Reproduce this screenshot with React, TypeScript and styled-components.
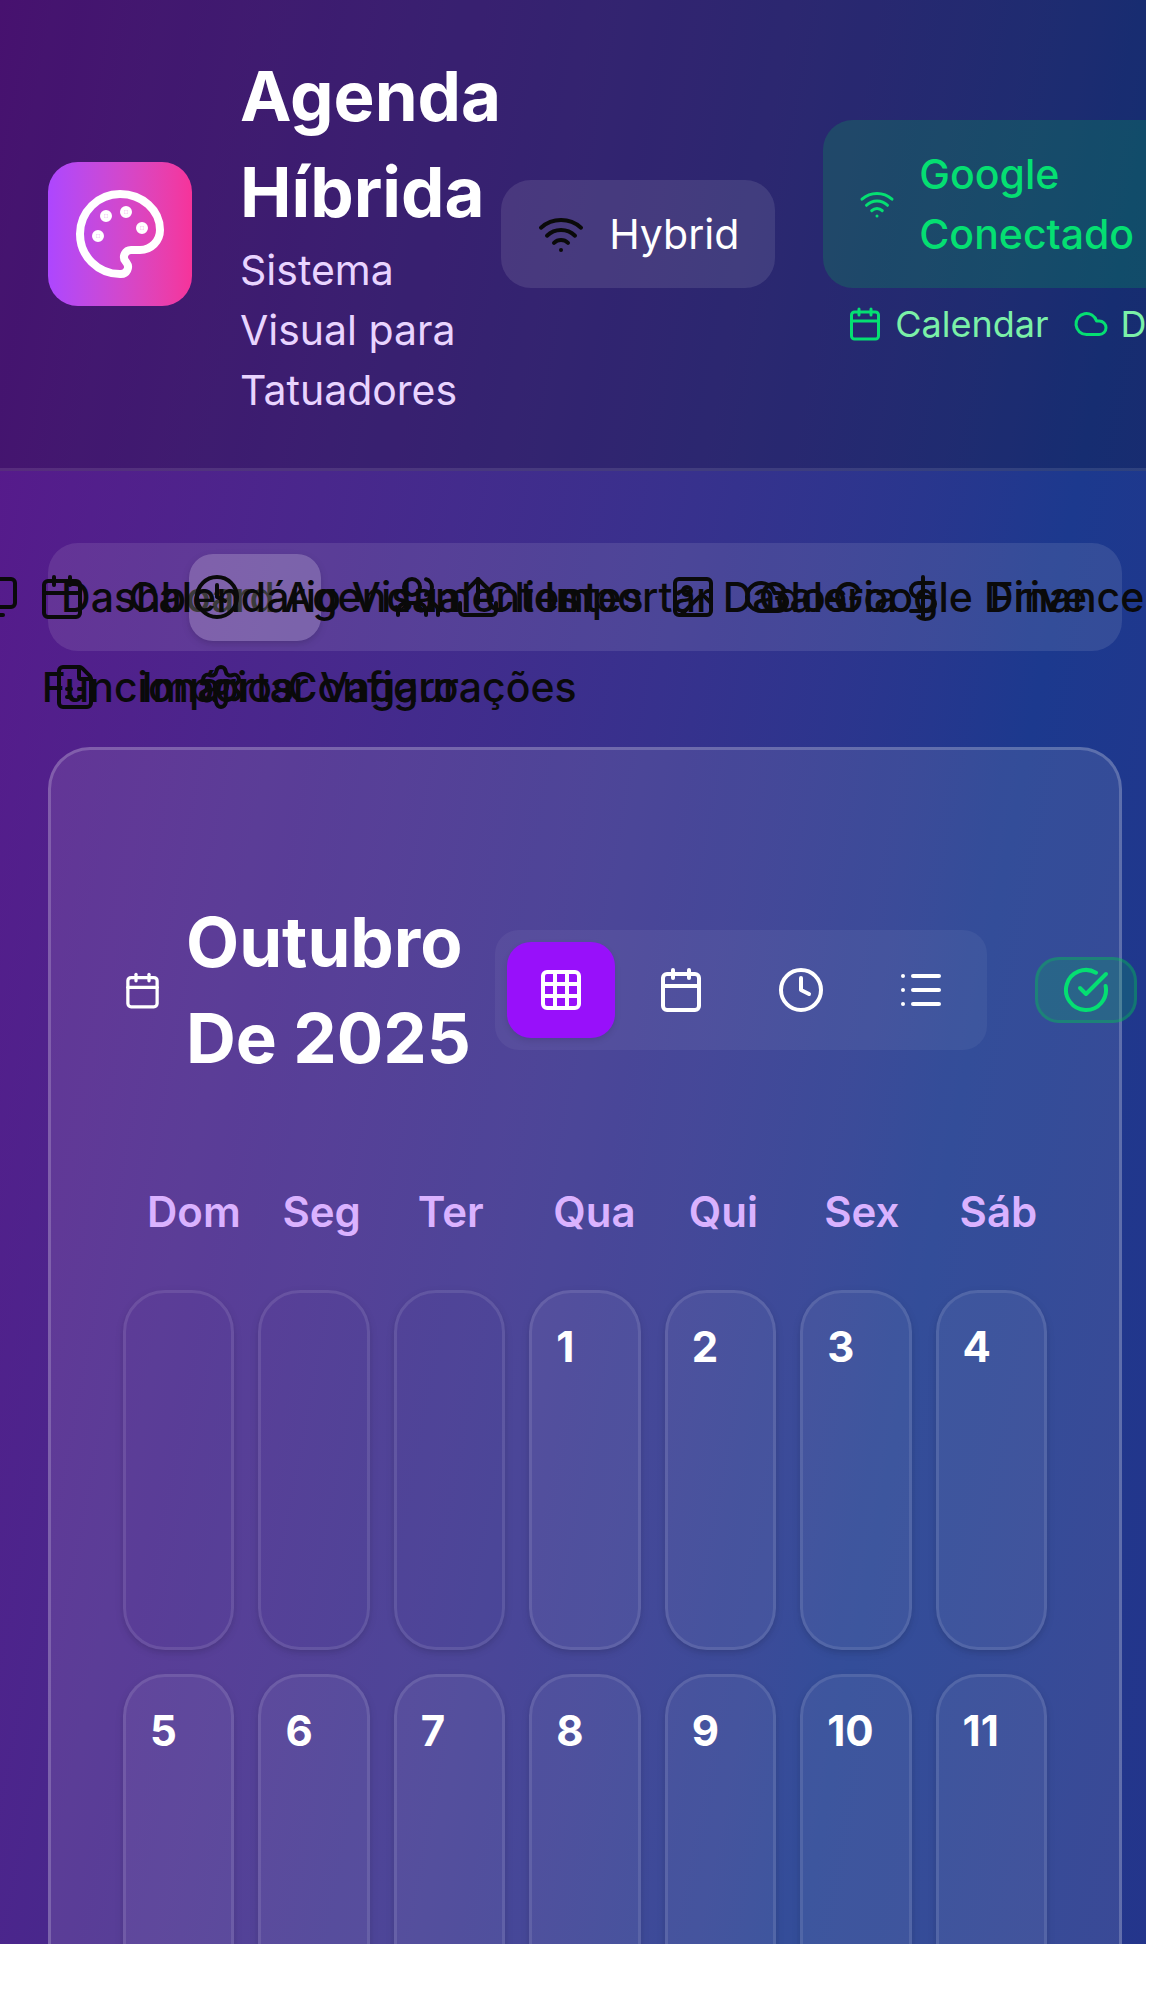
import React from "react";
import styled, { createGlobalStyle } from "styled-components";
import {
  Calendar,
  CircleCheckBig,
  Clock,
  Cloud,
  DollarSign,
  FileSpreadsheet,
  Grid3x3,
  Image,
  List,
  LucideIcon,
  Monitor,
  Palette,
  Settings,
  Upload,
  Users,
  Wifi,
} from "lucide-react";

const GlobalStyle = createGlobalStyle`
  *, *::before, *::after { box-sizing: border-box; }
  body {
    margin: 0;
    background: #ffffff;
    color: #0a0a0a;
    font-family: Inter, "Liberation Sans", sans-serif;
    font-size: 41px;
    line-height: 60px;
  }
  h1, h2, p { margin: 0; padding: 0; }
  button { font: inherit; color: inherit; border: 0; background: none; padding: 0; cursor: pointer; }
  svg { flex: none; display: block; }
`;

const Viewport = styled.div`
  height: 100vh;
  overflow: hidden;
  clip-path: inset(0 24px 48px 0);
`;

const Page = styled.div`
  min-height: 6100px;
  background: linear-gradient(to bottom right in oklab, #59168b, #1c398e, #312c85);
`;

const Header = styled.header`
  display: flex;
  align-items: center;
  justify-content: space-between;
  padding: 48px;
  background: rgba(0, 0, 0, 0.2);
  border-bottom: 3px solid rgba(255, 255, 255, 0.1);
`;

const Brand = styled.div`
  display: flex;
  align-items: center;
  gap: 48px;
`;

const Logo = styled.div`
  flex: none;
  padding: 24px;
  border-radius: 30px;
  color: #ffffff;
  background: linear-gradient(to right in oklab, #ad46ff, #f6339a);
`;

const BrandTitle = styled.h1`
  font-size: 69px;
  line-height: 96px;
  font-weight: 700;
  color: #ffffff;
`;

const BrandSubtitle = styled.p`
  color: #e9d4ff;
`;

const StatusArea = styled.div`
  display: flex;
  align-items: center;
  gap: 48px;
`;

const StatusPill = styled.div<{ $tone: "neutral" | "success" }>`
  display: flex;
  align-items: center;
  gap: 24px;
  padding: 24px 36px;
  border-radius: 30px;
  font-weight: ${(p) => (p.$tone === "success" ? 500 : 400)};
  color: ${(p) => (p.$tone === "success" ? "#05df72" : "#ffffff")};
  background: ${(p) =>
    p.$tone === "success" ? "rgba(0, 201, 80, 0.2)" : "rgba(255, 255, 255, 0.1)"};
`;

const DarkIcon = styled.span`
  color: #0a0a0a;
`;

const GoogleStatus = styled.div`
  display: flex;
  flex-direction: column;
  gap: 12px;
`;

const ServiceList = styled.div`
  display: flex;
  gap: 24px;
  padding-left: 24px;
  font-size: 36px;
  line-height: 48px;
  color: #7bf1a8;
`;

const Service = styled.span`
  display: flex;
  align-items: center;
  gap: 12px;

  svg { color: #05df72; }
`;

const Main = styled.main`
  display: flex;
  flex-direction: column;
  gap: 96px;
  padding: 72px 48px;
`;

const TabBar = styled.nav`
  display: grid;
  grid-template-columns: repeat(8, minmax(0, 1fr));
  grid-auto-rows: 90px;
  align-items: center;
  height: 108px;
  padding: 9px;
  border-radius: 30px;
  background: rgba(255, 255, 255, 0.1);
`;

const Tab = styled.button<{ $active: boolean }>`
  display: flex;
  align-items: center;
  justify-content: center;
  gap: 42px;
  height: 87px;
  border-radius: 24px;
  font-weight: 500;
  white-space: nowrap;
  background: ${(p) => (p.$active ? "rgba(255, 255, 255, 0.2)" : "transparent")};
  box-shadow: ${(p) =>
    p.$active ? "0 3px 9px rgba(0, 0, 0, 0.1), 0 3px 6px -3px rgba(0, 0, 0, 0.1)" : "none"};
`;

const Panel = styled.section`
  display: flex;
  flex-direction: column;
  gap: 72px;
  padding: 144px 72px 72px;
  border: 3px solid rgba(255, 255, 255, 0.2);
  border-radius: 42px;
  background: rgba(255, 255, 255, 0.1);
`;

const PanelHeader = styled.div`
  display: flex;
  align-items: center;
  gap: 24px;
  color: #ffffff;
`;

const MonthTitle = styled.h2`
  font-size: 69px;
  line-height: 96px;
  font-weight: 700;
`;

const Controls = styled.div`
  display: flex;
  align-items: center;
  gap: 48px;
`;

const ViewSwitch = styled.div`
  display: flex;
  gap: 12px;
  padding: 12px;
  border-radius: 24px;
  background: rgba(255, 255, 255, 0.05);
`;

const ViewButton = styled.button<{ $active: boolean }>`
  padding: 24px 30px;
  border-radius: 24px;
  background: ${(p) => (p.$active ? "#9810fa" : "transparent")};
  box-shadow: ${(p) => (p.$active ? "0 3px 6px rgba(0, 0, 0, 0.1)" : "none")};
`;

const SyncBadge = styled.span`
  padding: 6px 24px;
  border: 3px solid rgba(0, 201, 80, 0.3);
  border-radius: 24px;
  color: #05df72;
  background: rgba(0, 201, 80, 0.2);
`;

const CalendarGrid = styled.div`
  display: grid;
  grid-template-columns: repeat(7, minmax(0, 1fr));
  gap: 24px;
  font-size: 42px;
`;

const Weekday = styled.div`
  padding: 24px;
  font-weight: 600;
  color: #dab2ff;
`;

const Day = styled.div<{ $empty: boolean }>`
  height: 360px;
  padding: 24px;
  border: 3px solid rgba(255, 255, 255, 0.1);
  border-radius: 42px;
  font-weight: 700;
  color: #ffffff;
  background: ${(p) => (p.$empty ? "transparent" : "rgba(255, 255, 255, 0.05)")};
  box-shadow: 0 3px 9px rgba(0, 0, 0, 0.1), 0 3px 6px -3px rgba(0, 0, 0, 0.1);
`;

const tabs: { label: string; icon: LucideIcon }[] = [
  { label: "Dashboard", icon: Monitor },
  { label: "Calendário Visual", icon: Calendar },
  { label: "Agendamentos", icon: Clock },
  { label: "Clientes", icon: Users },
  { label: "Importar Dados", icon: Upload },
  { label: "Galeria", icon: Image },
  { label: "Google Drive", icon: Cloud },
  { label: "Financeiro", icon: DollarSign },
  { label: "Funcionários", icon: Users },
  { label: "Importar Vagaro", icon: FileSpreadsheet },
  { label: "Configurações", icon: Settings },
];

const views: { label: string; icon: LucideIcon }[] = [
  { label: "Mês", icon: Grid3x3 },
  { label: "Semana", icon: Calendar },
  { label: "Dia", icon: Clock },
  { label: "Lista", icon: List },
];

const weekdays = ["Dom", "Seg", "Ter", "Qua", "Qui", "Sex", "Sáb"];
const LEADING_BLANKS = 3;
const days = Array.from({ length: 35 }, (_, i) => {
  const day = i - LEADING_BLANKS + 1;
  return day >= 1 && day <= 31 ? day : null;
});

export default function App() {
  const [activeTab, setActiveTab] = React.useState("Calendário Visual");
  const [activeView, setActiveView] = React.useState("Mês");

  return (
    <Viewport>
      <GlobalStyle />
      <Page>
        <Header>
          <Brand>
            <Logo>
              <Palette size={96} />
            </Logo>
            <div>
              <BrandTitle>Agenda Híbrida</BrandTitle>
              <BrandSubtitle>Sistema Visual para Tatuadores</BrandSubtitle>
            </div>
          </Brand>
          <StatusArea>
            <StatusPill $tone="neutral">
              <DarkIcon>
                <Wifi size={48} />
              </DarkIcon>
              Hybrid
            </StatusPill>
            <GoogleStatus>
              <StatusPill $tone="success">
                <Wifi size={36} />
                Google Conectado
              </StatusPill>
              <ServiceList>
                <Service>
                  <Calendar size={36} />
                  Calendar
                </Service>
                <Service>
                  <Cloud size={36} />
                  Drive
                </Service>
              </ServiceList>
            </GoogleStatus>
          </StatusArea>
        </Header>

        <Main>
          <TabBar>
            {tabs.map(({ label, icon: Icon }) => (
              <Tab
                key={label}
                type="button"
                $active={label === activeTab}
                onClick={() => setActiveTab(label)}
              >
                <Icon size={48} />
                {label}
              </Tab>
            ))}
          </TabBar>

          <Panel>
            <PanelHeader>
              <Calendar size={39} />
              <MonthTitle>Outubro De{"\u00a0"}2025</MonthTitle>
              <Controls>
                <ViewSwitch>
                  {views.map(({ label, icon: Icon }) => (
                    <ViewButton
                      key={label}
                      type="button"
                      aria-label={label}
                      $active={label === activeView}
                      onClick={() => setActiveView(label)}
                    >
                      <Icon size={48} />
                    </ViewButton>
                  ))}
                </ViewSwitch>
                <SyncBadge>
                  <CircleCheckBig size={48} />
                </SyncBadge>
              </Controls>
            </PanelHeader>

            <CalendarGrid>
              {weekdays.map((name) => (
                <Weekday key={name}>{name}</Weekday>
              ))}
              {days.map((day, i) => (
                <Day key={i} $empty={day === null}>
                  {day}
                </Day>
              ))}
            </CalendarGrid>
          </Panel>
        </Main>
      </Page>
    </Viewport>
  );
}
